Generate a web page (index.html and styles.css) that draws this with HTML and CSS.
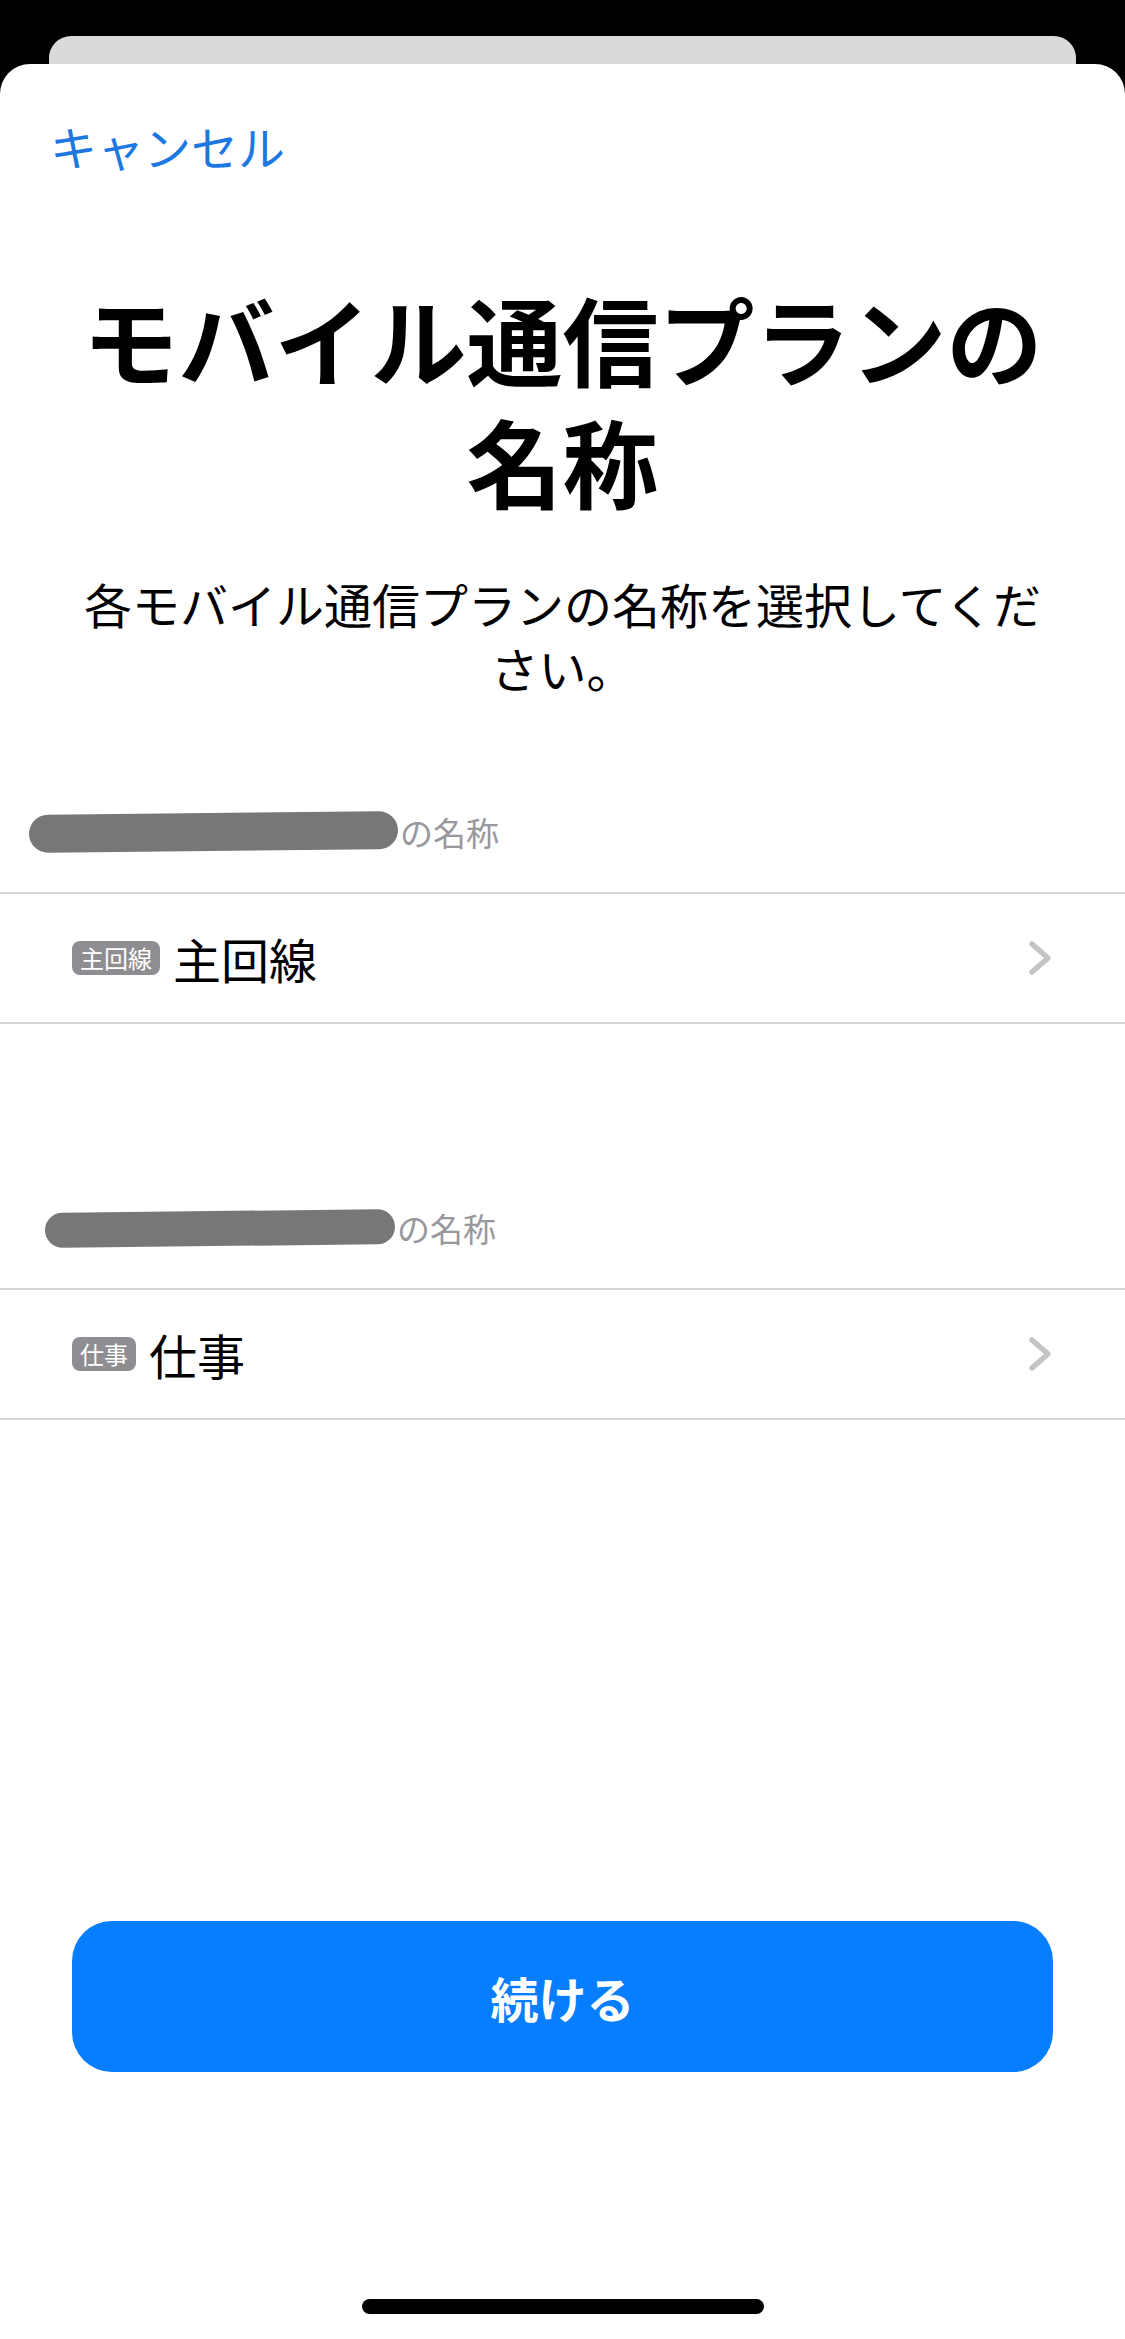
FILE: index.html
```html
<!DOCTYPE html>
<html lang="ja">
<head>
    <meta charset="UTF-8">
    <meta name="viewport" content="width=device-width, initial-scale=1.0">
    <title>モバイル通信プランの名称</title>
    <link rel="stylesheet" href="styles.css">
</head>
<body>

    <div class="screen">
        <div class="back-card"></div>

        <div class="sheet">
            <div class="nav">
                <a class="cancel" href="#">キャンセル</a>
            </div>

            <h1 class="title">モバイル通信プランの名称</h1>
            <p class="subtitle">各モバイル通信プランの名称を選択してください。</p>

            <div class="group">
                <div class="group-header">
                    <span class="blob"></span>
                    <span>の名称</span>
                </div>
                <div class="group-list">
                    <div class="row">
                        <span class="badge">主回線</span>
                        <span class="label">主回線</span>
                        <svg class="chevron" width="24" height="40" viewBox="0 0 24 40">
                            <path d="M4 6 L20 20 L4 34" fill="none" stroke="#c4c4c7" stroke-width="5.5" stroke-linecap="round" stroke-linejoin="round"/>
                        </svg>
                    </div>
                </div>
            </div>

            <div class="group group-second">
                <div class="group-header">
                    <span class="blob blob-short"></span>
                    <span>の名称</span>
                </div>
                <div class="group-list">
                    <div class="row">
                        <span class="badge">仕事</span>
                        <span class="label">仕事</span>
                        <svg class="chevron" width="24" height="40" viewBox="0 0 24 40">
                            <path d="M4 6 L20 20 L4 34" fill="none" stroke="#c4c4c7" stroke-width="5.5" stroke-linecap="round" stroke-linejoin="round"/>
                        </svg>
                    </div>
                </div>
            </div>

            <div class="footer">
                <button class="continue" type="button">続ける</button>
                <div class="home-indicator"></div>
            </div>
        </div>
    </div>

</body>
</html>
```

FILE: styles.css
```css
body {
    margin: 0;
    background-color: #000;
    font-family: "Noto Sans CJK JP", "Noto Sans", sans-serif;
}
.screen {
    width: 1125px;
    height: 2339px;
    padding-top: 36px;
    box-sizing: border-box;
    overflow: hidden;
    display: flex;
    flex-direction: column;
}
.back-card {
    height: 28px;
    margin: 0 49px;
    background-color: #dadada;
    border-radius: 22px 22px 0 0;
}
.sheet {
    flex: 1;
    display: flex;
    flex-direction: column;
    background-color: #fff;
    border-radius: 30px 30px 0 0;
    padding-bottom: 25px;
}
.nav {
    padding: 52px 0 0 50px;
}
.cancel {
    display: block;
    font-size: 47px;
    line-height: 60px;
    color: #1c78e0;
    text-decoration: none;
}
.title {
    margin: 101px 72px 0;
    font-size: 96px;
    line-height: 122px;
    font-weight: 700;
    text-align: center;
    color: #000;
}
.subtitle {
    margin: 50px 72px 0;
    font-size: 48px;
    line-height: 64px;
    text-align: center;
    color: #000;
}
.group {
    margin-top: 113px;
}
.group-second {
    margin-top: 184px;
}
.group-header {
    display: flex;
    align-items: center;
    gap: 2px;
    height: 40px;
    margin-bottom: 40px;
    padding-left: 29px;
    font-size: 33px;
    color: #98989d;
}
.blob {
    width: 369px;
    height: 38px;
    border-radius: 19px;
    background-color: #777;
    transform: rotate(-0.6deg);
}
.blob-short {
    width: 350px;
    height: 35px;
    margin-left: 16px;
}
.group-list {
    border-top: 2px solid #d4d4d6;
    border-bottom: 2px solid #d4d4d6;
}
.row {
    display: flex;
    align-items: center;
    gap: 13px;
    height: 128px;
    padding: 0 73px 0 72px;
}
.badge {
    height: 34px;
    padding: 0 8px;
    border-radius: 8px;
    background-color: #8e8e92;
    color: #fff;
    font-size: 24px;
    line-height: 34px;
}
.label {
    flex: 1;
    font-size: 48px;
    color: #000;
}
.footer {
    margin-top: auto;
    display: flex;
    flex-direction: column;
    align-items: center;
}
.continue {
    width: 981px;
    height: 151px;
    border: none;
    border-radius: 40px;
    background-color: #077dff;
    color: #fff;
    font-family: inherit;
    font-size: 48px;
    font-weight: 700;
    cursor: pointer;
}
.home-indicator {
    width: 402px;
    height: 15px;
    margin-top: 227px;
    border-radius: 8px;
    background-color: #000;
}
```
